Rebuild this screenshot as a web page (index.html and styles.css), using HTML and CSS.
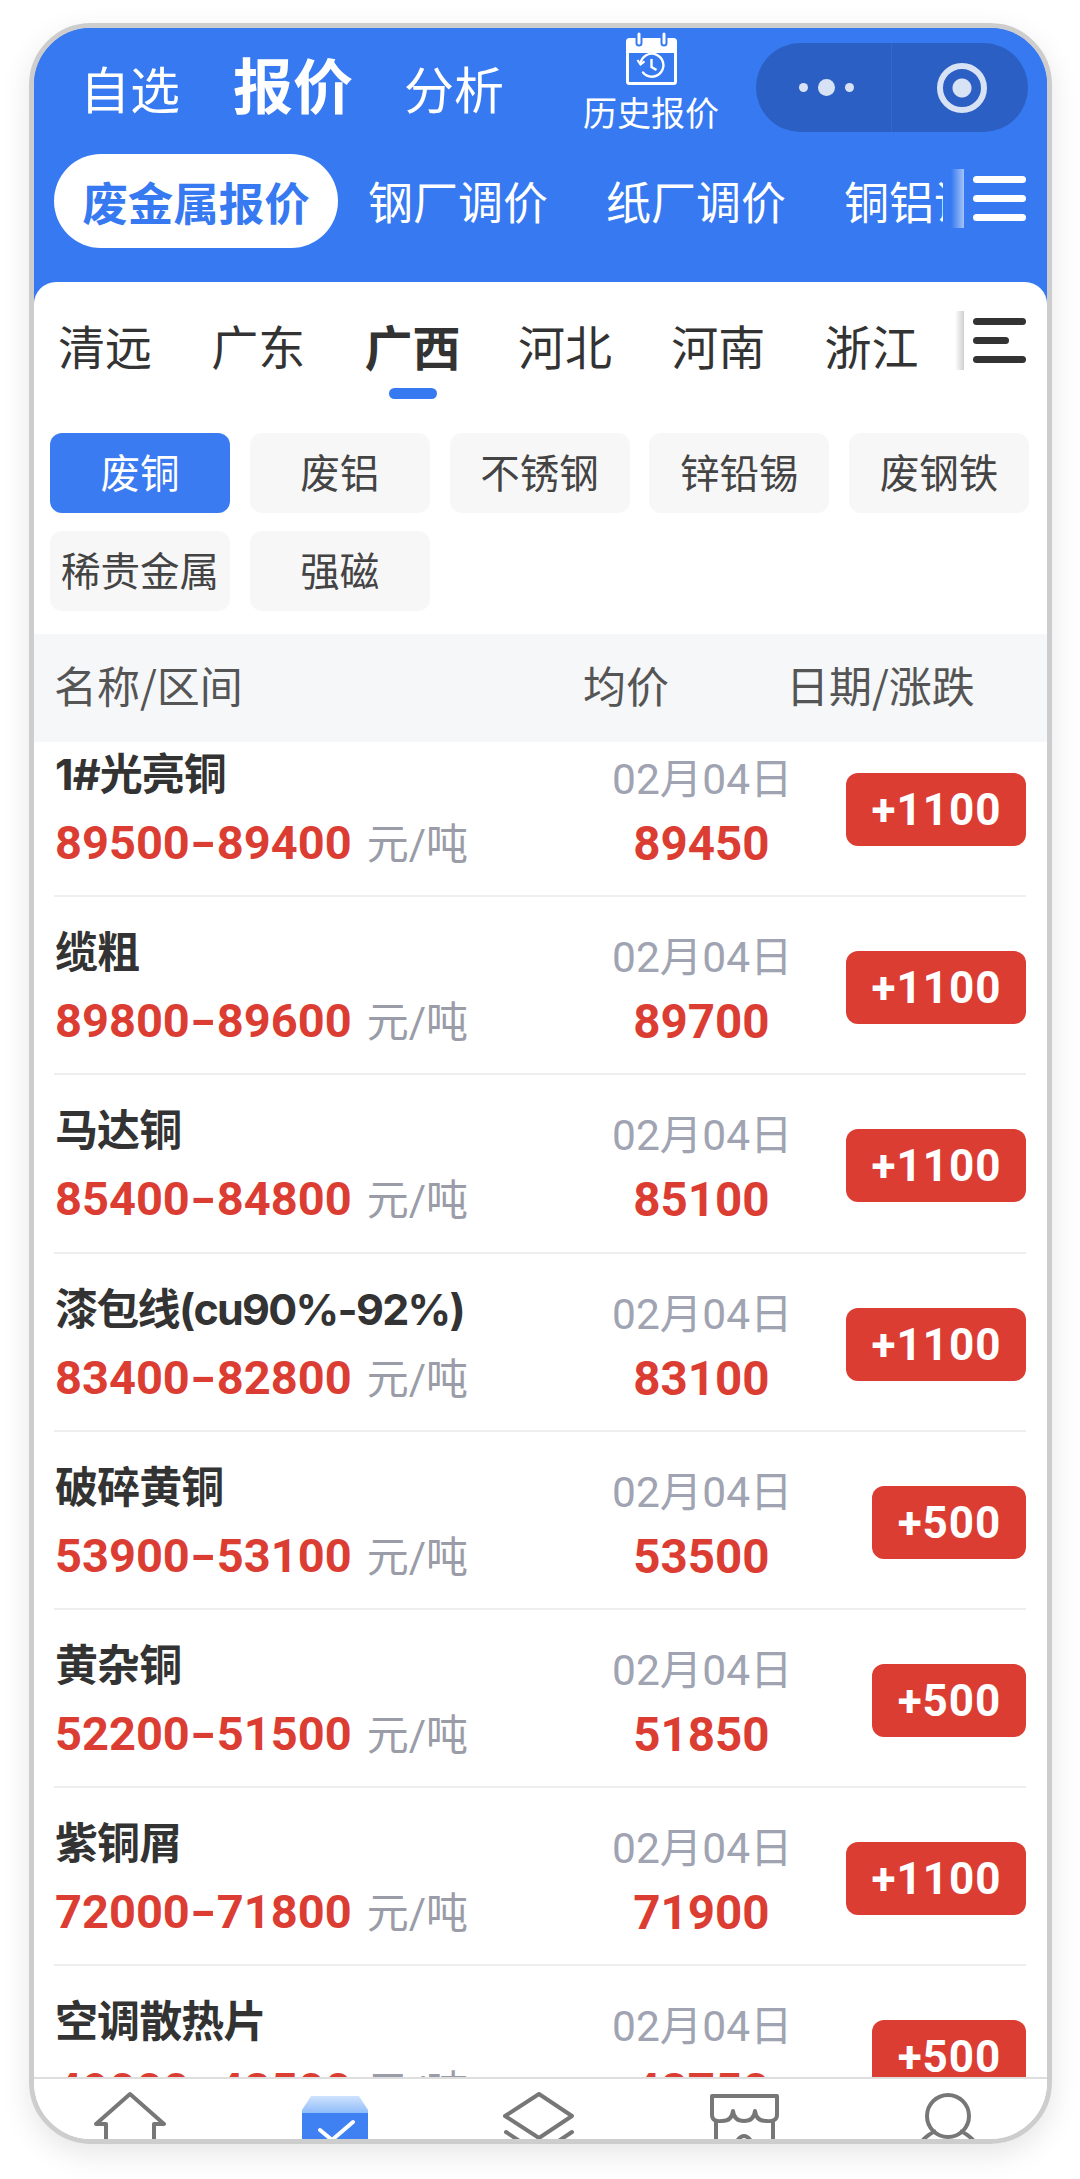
FILE: index.html
```html
<!DOCTYPE html>
<html lang="zh-CN">
<head>
<meta charset="utf-8">
<title>报价</title>
<link rel="stylesheet" href="styles.css">
</head>
<body>
<main class="frame">
  <header class="head">
    <div class="topbar">
      <nav class="maintabs">
        <span class="maintab maintab-first">自选</span>
        <span class="maintab is-on">报价</span>
        <span class="maintab">分析</span>
      </nav>
      <div class="history">
        <svg class="cal" viewBox="0 0 51 53" width="51" height="53">
          <path d="M2 8h47v13H2z" fill="#fff"/>
          <rect x="1.5" y="7.5" width="48" height="44" rx="2" fill="none" stroke="#fff" stroke-width="3"/>
          <path d="M13 2v9M38 2v9" stroke="#3679f1" stroke-width="7" stroke-linecap="round"/>
          <path d="M13 2v9M38 2v9" stroke="#fff" stroke-width="3" stroke-linecap="round"/>
          <path d="M14.5 31.5a11.5 11.5 0 1 1 2.5 9" fill="none" stroke="#fff" stroke-width="2.4" stroke-linecap="round"/>
          <path d="M11.5 28l3 4.5 4-3.2" fill="none" stroke="#fff" stroke-width="2.2"/>
          <path d="M25.5 27v8l5 3" fill="none" stroke="#fff" stroke-width="2.4"/>
        </svg>
        <span class="history-label">历史报价</span>
      </div>
      <div class="capsule">
        <div class="capsule-side capsule-more">
          <i class="dot dot-s"></i><i class="dot dot-l"></i><i class="dot dot-s"></i>
        </div>
        <div class="capsule-side capsule-close"><i class="ring"></i></div>
      </div>
    </div>
    <div class="subbar">
      <div class="subtabs">
        <span class="subtab is-on">废金属报价</span>
        <span class="subtab">钢厂调价</span>
        <span class="subtab">纸厂调价</span>
        <span class="subtab">铜铝调价</span>
      </div>
      <div class="more more-light"><i class="fade"></i><span class="burger"><i></i><i></i><i></i></span></div>
    </div>
  </header>

  <section class="card">
    <div class="citybar">
      <div class="cities">
        <span class="city">清远</span>
        <span class="city">广东</span>
        <span class="city is-on">广西</span>
        <span class="city">河北</span>
        <span class="city">河南</span>
        <span class="city">浙江</span>
      </div>
      <div class="more more-dark"><i class="fade"></i><span class="burger"><i></i><i></i><i></i></span></div>
    </div>
    <div class="chips">
      <span class="chip is-on">废铜</span>
      <span class="chip">废铝</span>
      <span class="chip">不锈钢</span>
      <span class="chip">锌铅锡</span>
      <span class="chip">废钢铁</span>
      <span class="chip">稀贵金属</span>
      <span class="chip">强磁</span>
    </div>
    <div class="thead">
      <span class="th-name">名称/区间</span>
      <span class="th-avg">均价</span>
      <span class="th-date">日期/涨跌</span>
    </div>
    <div class="list">
      <div class="rows">
        <article class="row"><div class="c-name"><div class="name">1#光亮铜</div><div class="range"><b>89500<i class="dash">-</i>89400</b> <span>元/吨</span></div></div><div class="c-mid"><div class="date">02月04日</div><div class="avg">89450</div></div><div class="c-badge"><span class="badge">+1100</span></div></article>
        <article class="row"><div class="c-name"><div class="name">缆粗</div><div class="range"><b>89800<i class="dash">-</i>89600</b> <span>元/吨</span></div></div><div class="c-mid"><div class="date">02月04日</div><div class="avg">89700</div></div><div class="c-badge"><span class="badge">+1100</span></div></article>
        <article class="row"><div class="c-name"><div class="name">马达铜</div><div class="range"><b>85400<i class="dash">-</i>84800</b> <span>元/吨</span></div></div><div class="c-mid"><div class="date">02月04日</div><div class="avg">85100</div></div><div class="c-badge"><span class="badge">+1100</span></div></article>
        <article class="row"><div class="c-name"><div class="name name-tight">漆包线(cu90%-92%)</div><div class="range"><b>83400<i class="dash">-</i>82800</b> <span>元/吨</span></div></div><div class="c-mid"><div class="date">02月04日</div><div class="avg">83100</div></div><div class="c-badge"><span class="badge">+1100</span></div></article>
        <article class="row"><div class="c-name"><div class="name">破碎黄铜</div><div class="range"><b>53900<i class="dash">-</i>53100</b> <span>元/吨</span></div></div><div class="c-mid"><div class="date">02月04日</div><div class="avg">53500</div></div><div class="c-badge"><span class="badge badge-s">+500</span></div></article>
        <article class="row"><div class="c-name"><div class="name">黄杂铜</div><div class="range"><b>52200<i class="dash">-</i>51500</b> <span>元/吨</span></div></div><div class="c-mid"><div class="date">02月04日</div><div class="avg">51850</div></div><div class="c-badge"><span class="badge badge-s">+500</span></div></article>
        <article class="row"><div class="c-name"><div class="name">紫铜屑</div><div class="range"><b>72000<i class="dash">-</i>71800</b> <span>元/吨</span></div></div><div class="c-mid"><div class="date">02月04日</div><div class="avg">71900</div></div><div class="c-badge"><span class="badge">+1100</span></div></article>
        <article class="row"><div class="c-name"><div class="name">空调散热片</div><div class="range"><b>49000<i class="dash">-</i>48500</b> <span>元/吨</span></div></div><div class="c-mid"><div class="date">02月04日</div><div class="avg">48750</div></div><div class="c-badge"><span class="badge badge-s">+500</span></div></article>
      </div>
    </div>
  </section>

  <footer class="tabbar">
    <svg class="ti" viewBox="0 0 72 72" width="72" height="72"><path d="M12 60V33H2L36 3l34 30H60v27" fill="none" stroke="#777" stroke-width="4" stroke-linejoin="round" stroke-linecap="round"/></svg>
    <svg class="ti" viewBox="0 0 72 72" width="72" height="72">
      <defs><linearGradient id="lid" x1="0" y1="0" x2="0" y2="1"><stop offset="0" stop-color="#cfe3fd"/><stop offset="1" stop-color="#8fbcf9"/></linearGradient></defs>
      <path d="M3 22h66v50H3z" fill="#3f80f2"/>
      <path d="M12 5h48l9 14v3H3v-3z" fill="url(#lid)"/>
      <path d="M21 39l12 10 21-18" fill="none" stroke="#fff" stroke-width="4" stroke-linecap="round" stroke-linejoin="round"/>
    </svg>
    <svg class="ti" viewBox="0 0 72 72" width="72" height="72"><path d="M36 3l33 22-33 22L2 25zM3 41l33 22 33-22" fill="none" stroke="#777" stroke-width="4" stroke-linejoin="round" stroke-linecap="round"/></svg>
    <svg class="ti" viewBox="0 0 72 72" width="72" height="72"><path d="M4 5h65v19q0 7-11 6-10 0-11-10-1 10-11 10t-11-10q-1 10-11 10Q4 31 4 24zM8 31v41M65 31v41M29 50q7-10 14 0" fill="none" stroke="#777" stroke-width="4" stroke-linejoin="round"/></svg>
    <svg class="ti" viewBox="0 0 72 72" width="72" height="72"><circle cx="36" cy="25" r="21" fill="none" stroke="#777" stroke-width="4"/><path d="M10 50q6-7 14-10M48 40q8 3 14 10" fill="none" stroke="#777" stroke-width="4"/></svg>
  </footer>
</main>
</body>
</html>
```

FILE: styles.css
```css
* { box-sizing: border-box; }
html, body { margin: 0; padding: 0; background: #fff; }
body {
  width: 1080px;
  height: 2179px;
  overflow: hidden;
  padding: 23px 28px 0 29px;
  font-family: Roboto, "Noto Sans CJK SC", sans-serif;
  color: #333;
}
i { display: block; font-style: normal; }

.frame {
  width: 1023px;
  height: 2121px;
  border: 5px solid #cdcdcd;
  border-radius: 62px;
  overflow: hidden;
  display: flex;
  flex-direction: column;
  background: linear-gradient(#3679f1 0 320px, #fff 320px);
  box-shadow: 0 10px 30px rgba(0, 0, 0, .1);
}

/* header */
.head { height: 254px; flex: none; background: #3679f1; color: #fff; }
.topbar { display: flex; height: 126px; padding-left: 46px; }
.maintabs { display: flex; align-items: baseline; gap: 51px; height: 100px; padding-top: 20px; }
.maintab { font-size: 50px; line-height: 70px; font-family: "Noto Sans CJK SC", sans-serif; }
.maintab-first { margin-right: 2px; }
.maintab.is-on { font-size: 60px; font-weight: 700; }
.history { display: flex; flex-direction: column; align-items: center; width: 136px; margin-left: 79px; padding-top: 4px; }
.cal { display: block; }
.history-label { font-size: 34px; line-height: 40px; margin-top: 7px; white-space: nowrap; font-family: "Noto Sans CJK SC", sans-serif; }
.capsule { display: flex; width: 272px; height: 89px; margin: 15px 0 0 37px; border-radius: 45px; background: #2c5fc3; }
.capsule-side { display: flex; align-items: center; justify-content: center; }
.capsule-more { width: 136px; gap: 10px; border-right: 1px solid #3468cc; padding-left: 6px; }
.capsule-close { flex: 1; padding-left: 4px; }
.dot { border-radius: 50%; background: #d8e2f5; }
.dot-s { width: 9px; height: 9px; }
.dot-l { width: 17px; height: 17px; }
.ring { width: 50px; height: 50px; border-radius: 50%; border: 6px solid #d8e2f5; background: radial-gradient(circle, #d8e2f5 0 9px, transparent 10px); }

.subbar { display: flex; height: 94px; padding-left: 20px; }
.subtabs { display: flex; align-items: center; width: 889px; flex: none; overflow: hidden; white-space: nowrap; }
.subtab { flex: none; font-size: 45px; line-height: 94px; margin-left: 58px; font-family: "Noto Sans CJK SC", sans-serif; }
.subtab.is-on { width: 284px; height: 94px; margin: 0 -28px 0 0; border-radius: 47px; background: #fff; color: #3679f1; font-size: 45.5px; font-weight: 700; text-align: center; }

.more { display: flex; flex: none; align-items: flex-start; }
.fade { width: 13px; }
.more-light { padding: 15px 0 0 8px; }
.more-light .fade { height: 59px; background: linear-gradient(to right, rgba(255,255,255,0), rgba(255,255,255,.55)); }
.more-dark .fade { width: 9px; height: 59px; background: linear-gradient(to right, rgba(190,190,190,0), #cfcfcf); }
.burger { display: flex; flex-direction: column; justify-content: space-between; width: 53px; height: 45px; margin-left: 9px; margin-top: 7px; }
.burger i { height: 7px; border-radius: 4px; background: #fff; }
.more-dark .burger i { background: #333; }
.more-dark .burger i:nth-child(2) { width: 36px; }

/* card */
.card { flex: 1; min-height: 0; display: flex; flex-direction: column; background: #fff; border-radius: 22px 22px 0 0; }
.citybar { display: flex; height: 151px; flex: none; padding: 29px 0 0 24px; }
.cities { display: flex; width: 897px; flex: none; gap: 59.3px; padding-top: 3px; }
.city { position: relative; font-size: 47px; line-height: 62px; font-family: "Noto Sans CJK SC", sans-serif; }
.city.is-on { font-size: 48px; font-weight: 700; margin-right: -2px; }
.city.is-on::after { content: ""; position: absolute; left: 24px; top: 74px; width: 48px; height: 11px; border-radius: 6px; background: #3679f1; }

.chips { display: grid; grid-template-columns: repeat(5, 180px); gap: 18px 19.75px; padding-left: 16px; flex: none; }
.chip { height: 80px; border-radius: 12px; background: #f7f7f7; color: #444; font-size: 39.5px; line-height: 76px; text-align: center; font-family: "Noto Sans CJK SC", sans-serif; white-space: nowrap; }
.chip.is-on { background: #3b7bf1; color: #fff; }

.thead { flex: none; display: flex; height: 108px; margin-top: 23px; padding: 0 0 8px 20px; align-items: center; background: #f6f7f9; color: #555; font-size: 43px; font-family: "Noto Sans CJK SC", sans-serif; }
.th-name { width: 529px; }
.th-avg { width: 203px; }

.list { flex: 1; min-height: 0; overflow: hidden; padding: 0 21px 0 20px; }
.rows { margin-top: -23px; }
.row { display: grid; grid-template-columns: 558px 178px 1fr; height: 178.2px; border-bottom: 2px solid #eeeeee; }
.c-name { padding: 25px 0 0 1px; }
.name { font-family: Inter, "Noto Sans CJK SC", sans-serif; font-size: 43px; letter-spacing: -.9px; line-height: 60px; font-weight: 700; white-space: nowrap; }
.name-tight { letter-spacing: -1.7px; }
.range { margin-top: 9px; line-height: 60px; white-space: nowrap; }
.range b { font-size: 47px; color: #dc3d33; font-weight: 700; }
.dash { display: inline-block; width: 27px; text-align: center; transform: scaleX(1.5); }
.range span { font-size: 42px; color: #9a9ca8; margin-left: 11px; }
.c-mid { padding: 31px 0 0 0; text-align: center; }
.date { font-size: 42.5px; line-height: 60px; color: #a0a3b1; white-space: nowrap; }
.avg { margin-top: 4px; padding-left: 1px; font-size: 47.5px; line-height: 60px; color: #dc3d33; font-weight: 700; }
.c-badge { display: flex; justify-content: flex-end; align-items: flex-start; padding-top: 54px; }
.badge { width: 180px; height: 73px; padding-left: 1px; border-radius: 12px; background: #dc3d33; color: #fff; font-size: 44px; font-weight: 700; line-height: 75px; text-align: center; letter-spacing: 1px; }
.badge-s { width: 154px; }

/* tab bar */
.tabbar { flex: none; display: flex; gap: 132.5px; height: 62px; overflow: hidden; padding: 12px 0 0 60px; border-top: 2px solid #dedede; background: #fff; }
.ti { flex: none; display: block; }
```
